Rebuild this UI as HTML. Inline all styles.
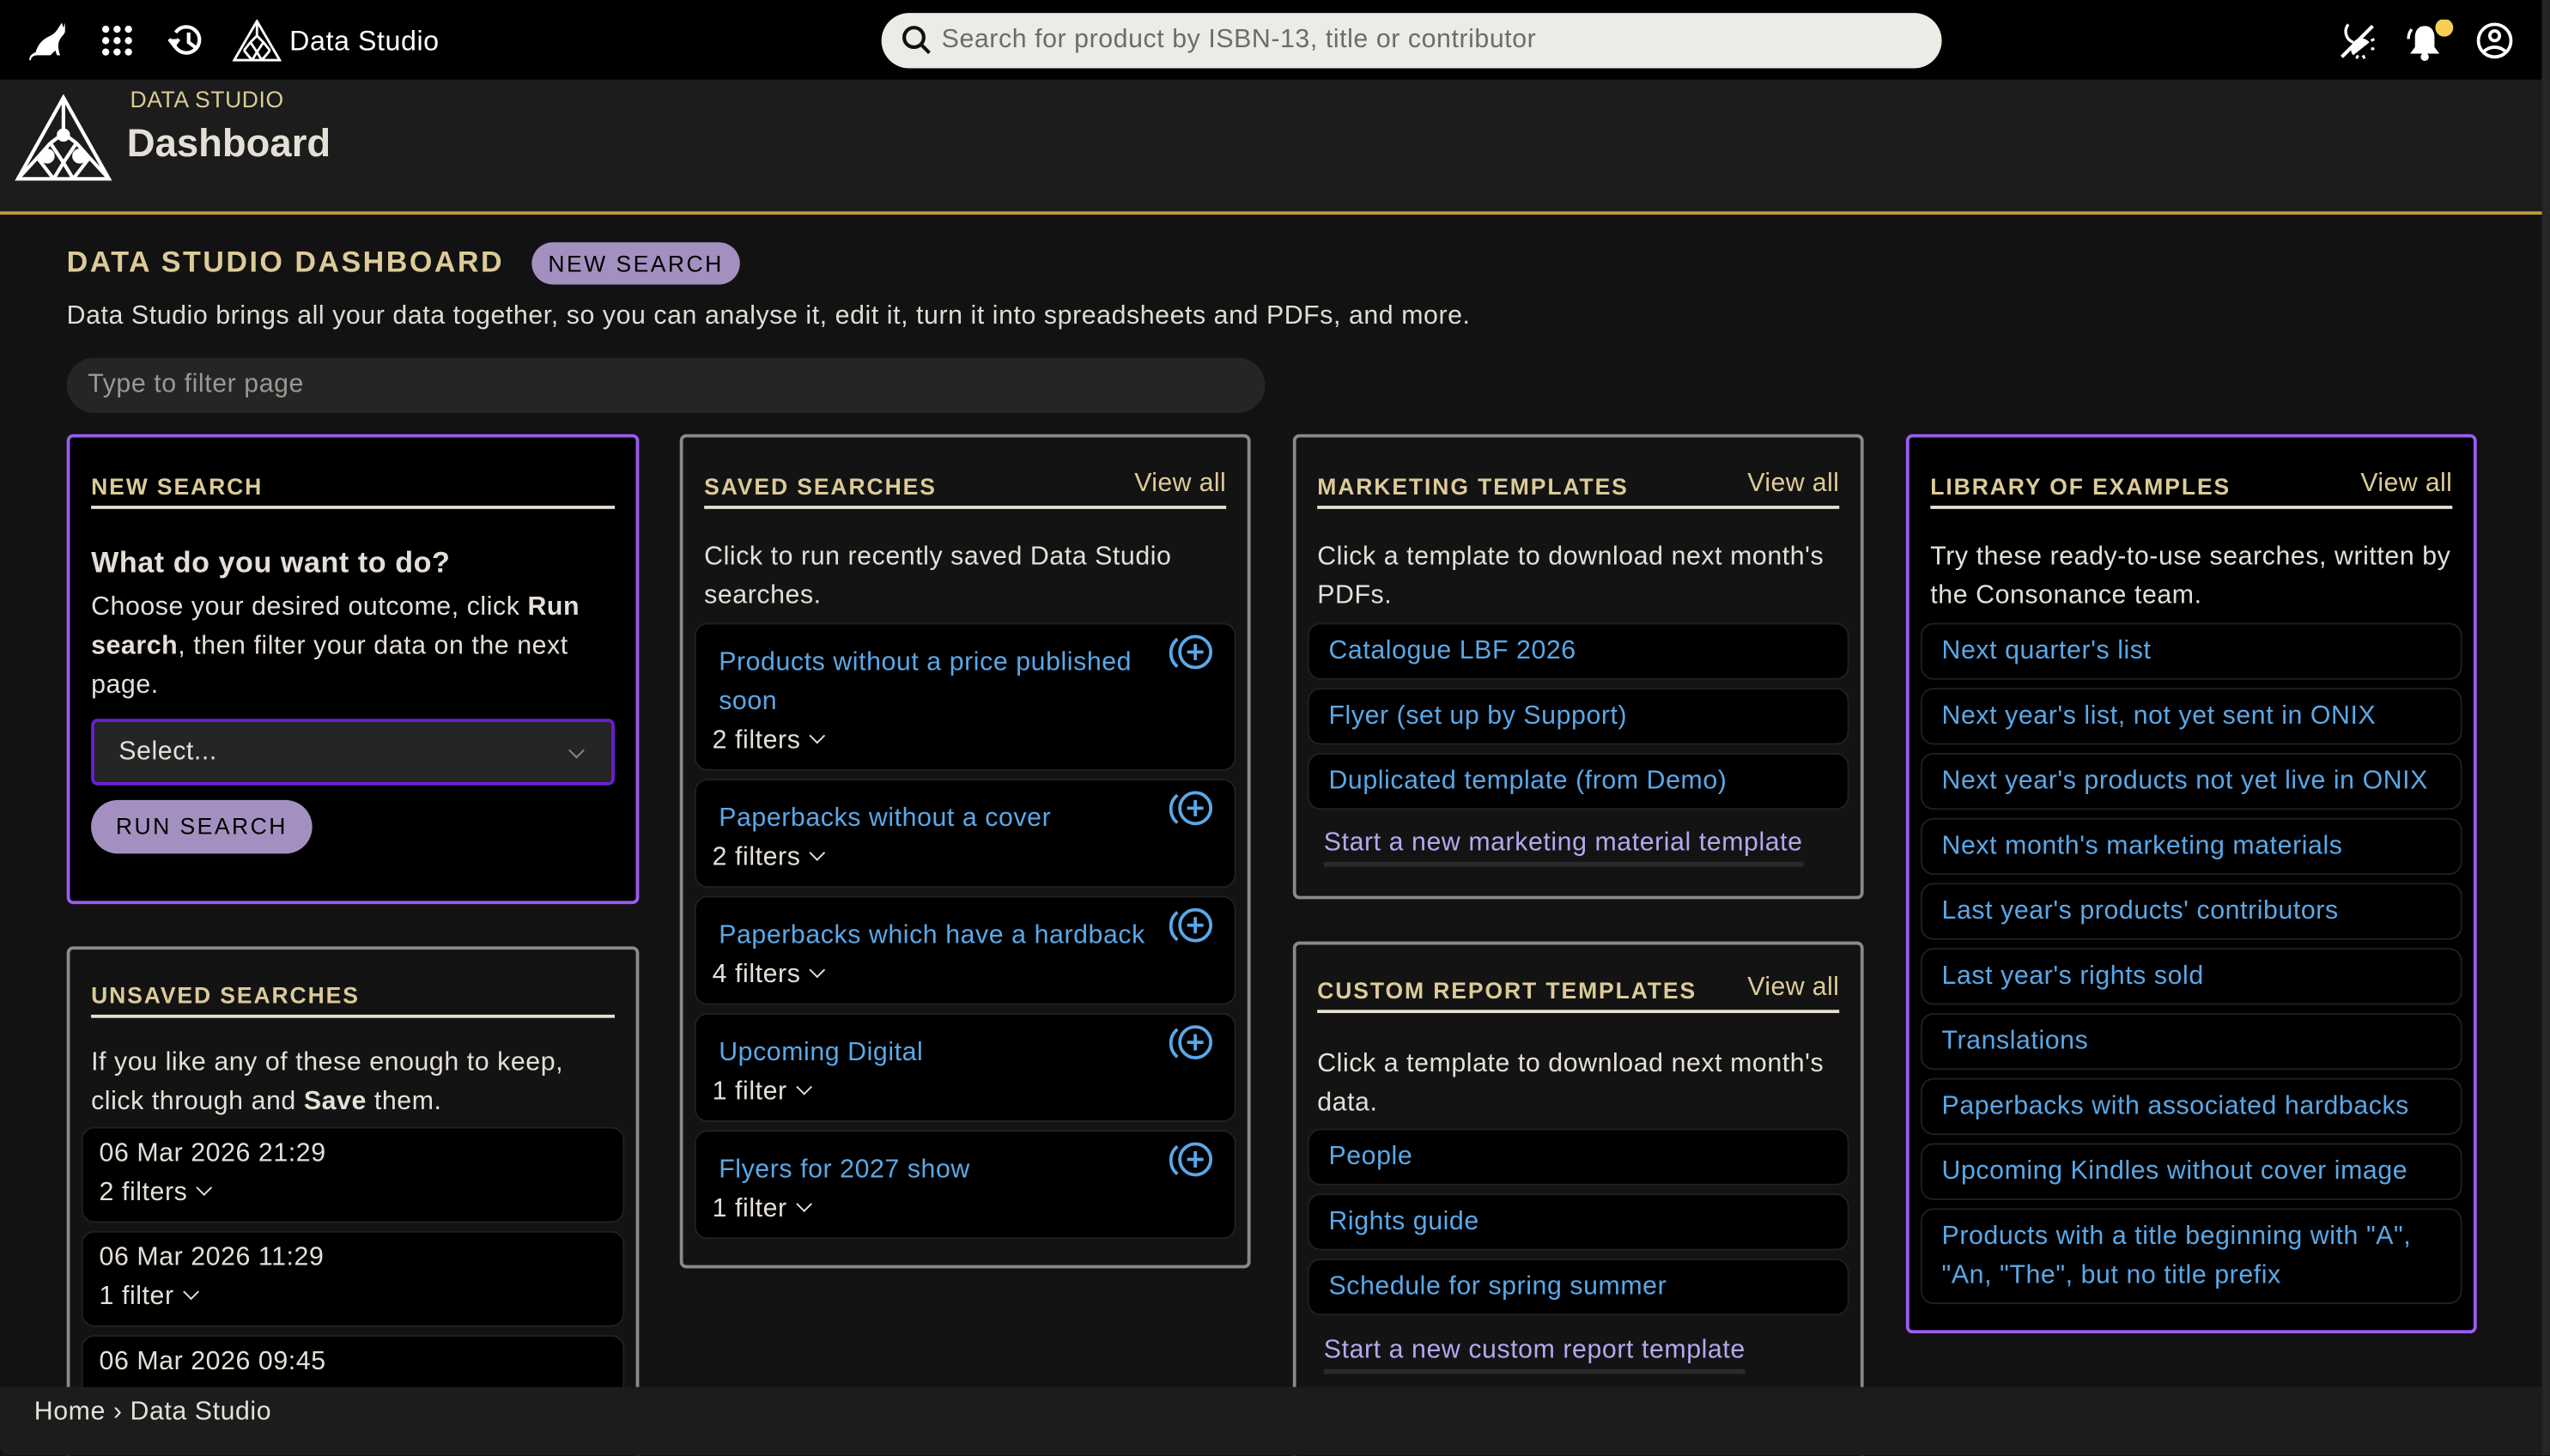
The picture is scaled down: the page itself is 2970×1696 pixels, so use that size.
<!DOCTYPE html>
<html><head><meta charset="utf-8"><style>
*{box-sizing:border-box;margin:0;padding:0}
html,body{width:2970px;height:1696px;overflow:hidden;background:#121212}
#s{position:absolute;left:0;top:0;width:1568px;height:895px;transform:scale(1.8941);transform-origin:0 0;font-family:"Liberation Sans",sans-serif;color:#e4e0d8;font-size:16px;letter-spacing:0.3px;background:#121212;overflow:hidden}
.a{position:absolute}
.top{left:0;top:0;width:1568px;height:49px;background:#000}
.hdr{left:0;top:49px;width:1568px;height:81px;background:#1c1c1c}
.gold{left:0;top:130px;width:1568px;height:2px;background:#c39a36}
.sb{left:1563px;top:0;width:5px;height:895px;background:#262626}
.panel{position:absolute;border:2px solid #8a8a86;border-radius:4px;background:#131313}
.purple{border-color:#9b5cf2;background:#000}
.h{position:absolute;left:13px;right:13px;top:22px;height:22px;border-bottom:2px solid #e6dfd2;font-size:14px;font-weight:bold;letter-spacing:1px;color:#dccb98}
.h span.v{position:absolute;right:0;top:-2px;font-size:16px;letter-spacing:0.2px;font-weight:normal;color:#dccb98}
.p{position:absolute;left:13px;right:10px;line-height:24px;color:#e4e0d8}
.it{position:absolute;left:7px;right:7px;background:#000;border:1px solid #202020;border-radius:8px}
.lk{color:#5aa8e8}
.it .lk{position:absolute;left:12px;top:5px;line-height:24px}
.lil{position:absolute;left:17px;color:#b4a8ee;border-bottom:3px solid #2a2a2a;line-height:22px}
.fl{position:absolute;left:10px;line-height:24px;color:#e4e0d8}
.chev{display:inline-block;width:7px;height:7px;border-right:1.6px solid #e4e0d8;border-bottom:1.6px solid #e4e0d8;transform:rotate(45deg);margin-left:7px;position:relative;top:-4px}
.plus{position:absolute;right:12px;top:6px}
</style></head><body><div id="s">
<div class="a top"></div>
<div class="a hdr"></div>
<div class="a gold"></div>

<svg class="a" style="left:18px;top:12px" width="24" height="26" viewBox="0 0 24 26"><path d="M20 2l1 3 1-3 0 5c0 2-2 3-3 5-2 3-1 7 0 10l-2 0-1-3-3 3-8 0c-2 0-4 1-4 3l-1 0c0-3 2-4 4-5 1-4 4-8 9-10 2-1 4-3 5-5z" fill="#fff"/></svg>
<svg class="a" style="left:62px;top:15px" width="20" height="20" viewBox="0 0 20 20" fill="#fff"><circle cx="3" cy="3" r="2.2"/><circle cx="10" cy="3" r="2.2"/><circle cx="17" cy="3" r="2.2"/><circle cx="3" cy="10" r="2.2"/><circle cx="10" cy="10" r="2.2"/><circle cx="17" cy="10" r="2.2"/><circle cx="3" cy="17" r="2.2"/><circle cx="10" cy="17" r="2.2"/><circle cx="17" cy="17" r="2.2"/></svg>
<svg class="a" style="left:102px;top:13px" width="24" height="24" viewBox="0 0 24 24" fill="none" stroke="#fff" stroke-width="2.2"><path d="M5 14a8 8 0 1 0 1-7"/><path d="M2 11l3 4 3-4" fill="#fff"/><path d="M14 7v6l4 3"/></svg>
<svg class="a" style="left:143px;top:12px" width="30" height="26" viewBox="0 0 30 26" fill="none" stroke="#fff" stroke-width="1.5"><path d="M15 1L1 25h28z"/><path d="M15 1v9M11 14l4-4 4 4M11 14l-4 5M19 14l4 5M7 19l5 6M23 19l-5 6M12 25l3-5 3 5M11 14l4 6 4-6"/></svg>
<div class="a" style="left:178px;top:16px;font-size:17px;color:#fff">Data Studio</div>

<div class="a" style="left:542px;top:8px;width:652px;height:34px;background:#ecebe6;border-radius:17px"></div>
<svg class="a" style="left:554px;top:15px" width="20" height="20" viewBox="0 0 20 20" fill="none" stroke="#111" stroke-width="2.2"><circle cx="8" cy="8" r="6"/><path d="M12.5 12.5l5 5"/></svg>
<div class="a" style="left:579px;top:16px;font-size:16px;color:#6c6c6c">Search for product by ISBN-13, title or contributor</div>

<svg class="a" style="left:1436px;top:12px" width="26" height="26" viewBox="0 0 26 26"><path d="M8 3a7 7 0 0 0 3 11 7 7 0 0 1-3-11z" fill="none" stroke="#fff" stroke-width="1.8"/><path d="M4 23L23 4" stroke="#fff" stroke-width="2.2"/><path d="M11 22a6 6 0 0 1 10-8z" fill="#fff"/><path d="M13 24l1-2M18 24l-1-2M22 18l2 0M22 13l2-1" stroke="#fff" stroke-width="1.6"/></svg>
<svg class="a" style="left:1478px;top:12px" width="32" height="26" viewBox="0 0 32 26"><path d="M13 4c-4 0-6 3-6 7v6l-3 4h18l-3-4v-6c0-4-2-7-6-7z" fill="#fff"/><circle cx="13" cy="23" r="2.5" fill="#fff"/><path d="M5 6a9 9 0 0 0-2 6" stroke="#fff" stroke-width="1.8" fill="none"/><circle cx="25" cy="5" r="5.5" fill="#f6ce55"/></svg>
<svg class="a" style="left:1522px;top:13px" width="24" height="24" viewBox="0 0 24 24" fill="none" stroke="#fff" stroke-width="2"><circle cx="12" cy="12" r="10"/><circle cx="12" cy="9" r="3"/><path d="M5 19c4-4 10-4 14 0"/></svg>

<svg class="a" style="left:9px;top:58px" width="60" height="54" viewBox="0 0 60 54" fill="none" stroke="#fff" stroke-width="2.2"><path d="M30 2L2 52h56z"/><path d="M30 2v22M22 30l8-6 8 6M22 30l-8 9M38 30l8 9M14 39l10 13M46 39l-10 13M22 30l8 12 8-12M24 52l6-10 6 10M2 52l12-13M58 52l-12-13"/><circle cx="30" cy="25" r="3" fill="#fff"/><circle cx="20" cy="38" r="3.5" fill="#fff"/><circle cx="40" cy="38" r="3.5" fill="#fff"/></svg>
<div class="a" style="left:80px;top:53px;font-size:14px;color:#dccb98">DATA STUDIO</div>
<div class="a" style="left:78px;top:75px;font-size:24px;font-weight:bold;letter-spacing:0;color:#e4e0d8">Dashboard</div>

<div class="a" style="left:41px;top:151px;font-size:18px;font-weight:bold;letter-spacing:1.3px;color:#dccb98">DATA STUDIO DASHBOARD</div>
<div class="a" style="left:327px;top:149px;width:128px;height:26px;background:#a390c0;border-radius:13px;color:#000;font-size:14px;letter-spacing:1.3px;text-align:center;line-height:26px">NEW SEARCH</div>
<div class="a" style="left:41px;top:186px;font-size:16px;color:#e0dcd4">Data Studio brings all your data together, so you can analyse it, edit it, turn it into spreadsheets and PDFs, and more.</div>
<div class="a" style="left:41px;top:220px;width:737px;height:34px;background:#252525;border-radius:17px;color:#9a9892;padding-left:13px;line-height:34px">Type to filter page</div>

<div class="panel purple" style="left:41px;top:267px;width:352px;height:289px">
 <div class="h">NEW SEARCH</div>
 <div class="p" style="top:65px;font-size:18px;font-weight:bold">What do you want to do?</div>
 <div class="p" style="top:93px">Choose your desired outcome, click <b>Run search</b>, then filter your data on the next page.</div>
 <div class="a" style="left:13px;top:173px;width:322px;height:41px;border:2px solid #6a1fd0;border-radius:4px;background:#252525;line-height:37px;padding-left:15px">Select...<span class="chev" style="position:absolute;right:18px;top:14px;border-color:#888"></span></div>
 <div class="a" style="left:13px;top:223px;width:136px;height:33px;background:#a390c0;border-radius:17px;color:#000;font-size:14px;letter-spacing:1.3px;text-align:center;line-height:33px">RUN SEARCH</div>
</div>

<div class="panel" style="left:41px;top:582px;width:352px;height:330px">
 <div class="h" style="top:20px">UNSAVED SEARCHES</div>
 <div class="p" style="top:58px">If you like any of these enough to keep, click through and <b>Save</b> them.</div>
 <div class="it" style="top:109px;height:59px"><div class="fl" style="top:4px">06 Mar 2026 21:29</div><div class="fl" style="top:28px">2 filters<span class="chev"></span></div></div>
 <div class="it" style="top:173px;height:59px"><div class="fl" style="top:4px">06 Mar 2026 11:29</div><div class="fl" style="top:28px">1 filter<span class="chev"></span></div></div>
 <div class="it" style="top:237px;height:59px"><div class="fl" style="top:4px">06 Mar 2026 09:45</div></div>
</div>

<div class="panel" style="left:418px;top:267px;width:351px;height:513px">
 <div class="h">SAVED SEARCHES<span class="v">View all</span></div>
 <div class="p" style="top:62px">Click to run recently saved Data Studio searches.</div>
 <div class="it" style="top:114px;height:91px"><div class="lk" style="position:absolute;left:14px;top:12px;right:60px;line-height:24px">Products without a price published soon</div><div class="fl" style="top:60px">2 filters<span class="chev"></span></div><svg class="plus" width="28" height="24" viewBox="0 0 28 24" fill="none" stroke="#5aa8e8" stroke-width="2"><path d="M5 3a11 11 0 0 0 0 17"/><circle cx="16" cy="11" r="9.5"/><path d="M16 6v10M11 11h10"/></svg></div>
 <div class="it" style="top:210px;height:67px"><div class="lk" style="position:absolute;left:14px;top:12px">Paperbacks without a cover</div><div class="fl" style="top:36px">2 filters<span class="chev"></span></div><svg class="plus" width="28" height="24" viewBox="0 0 28 24" fill="none" stroke="#5aa8e8" stroke-width="2"><path d="M5 3a11 11 0 0 0 0 17"/><circle cx="16" cy="11" r="9.5"/><path d="M16 6v10M11 11h10"/></svg></div>
 <div class="it" style="top:282px;height:67px"><div class="lk" style="position:absolute;left:14px;top:12px">Paperbacks which have a hardback</div><div class="fl" style="top:36px">4 filters<span class="chev"></span></div><svg class="plus" width="28" height="24" viewBox="0 0 28 24" fill="none" stroke="#5aa8e8" stroke-width="2"><path d="M5 3a11 11 0 0 0 0 17"/><circle cx="16" cy="11" r="9.5"/><path d="M16 6v10M11 11h10"/></svg></div>
 <div class="it" style="top:354px;height:67px"><div class="lk" style="position:absolute;left:14px;top:12px">Upcoming Digital</div><div class="fl" style="top:36px">1 filter<span class="chev"></span></div><svg class="plus" width="28" height="24" viewBox="0 0 28 24" fill="none" stroke="#5aa8e8" stroke-width="2"><path d="M5 3a11 11 0 0 0 0 17"/><circle cx="16" cy="11" r="9.5"/><path d="M16 6v10M11 11h10"/></svg></div>
 <div class="it" style="top:426px;height:67px"><div class="lk" style="position:absolute;left:14px;top:12px">Flyers for 2027 show</div><div class="fl" style="top:36px">1 filter<span class="chev"></span></div><svg class="plus" width="28" height="24" viewBox="0 0 28 24" fill="none" stroke="#5aa8e8" stroke-width="2"><path d="M5 3a11 11 0 0 0 0 17"/><circle cx="16" cy="11" r="9.5"/><path d="M16 6v10M11 11h10"/></svg></div>
</div>

<div class="panel" style="left:795px;top:267px;width:351px;height:286px">
 <div class="h">MARKETING TEMPLATES<span class="v">View all</span></div>
 <div class="p" style="top:62px">Click a template to download next month's PDFs.</div>
 <div class="it" style="top:114px;height:35px"><div class="lk">Catalogue LBF 2026</div></div>
 <div class="it" style="top:154px;height:35px"><div class="lk">Flyer (set up by Support)</div></div>
 <div class="it" style="top:194px;height:35px"><div class="lk">Duplicated template (from Demo)</div></div>
 <div class="lil" style="top:239px">Start a new marketing material template</div>
</div>

<div class="panel" style="left:795px;top:579px;width:351px;height:330px">
 <div class="h" style="top:20px">CUSTOM REPORT TEMPLATES<span class="v">View all</span></div>
 <div class="p" style="top:62px">Click a template to download next month's data.</div>
 <div class="it" style="top:113px;height:35px"><div class="lk">People</div></div>
 <div class="it" style="top:153px;height:35px"><div class="lk">Rights guide</div></div>
 <div class="it" style="top:193px;height:35px"><div class="lk">Schedule for spring summer</div></div>
 <div class="lil" style="top:239px">Start a new custom report template</div>
</div>

<div class="panel purple" style="left:1172px;top:267px;width:351px;height:553px">
 <div class="h">LIBRARY OF EXAMPLES<span class="v">View all</span></div>
 <div class="p" style="top:62px">Try these ready-to-use searches, written by the Consonance team.</div>
 <div class="it" style="top:114px;height:35px"><div class="lk">Next quarter's list</div></div>
 <div class="it" style="top:154px;height:35px"><div class="lk">Next year's list, not yet sent in ONIX</div></div>
 <div class="it" style="top:194px;height:35px"><div class="lk">Next year's products not yet live in ONIX</div></div>
 <div class="it" style="top:234px;height:35px"><div class="lk">Next month's marketing materials</div></div>
 <div class="it" style="top:274px;height:35px"><div class="lk">Last year's products' contributors</div></div>
 <div class="it" style="top:314px;height:35px"><div class="lk">Last year's rights sold</div></div>
 <div class="it" style="top:354px;height:35px"><div class="lk">Translations</div></div>
 <div class="it" style="top:394px;height:35px"><div class="lk">Paperbacks with associated hardbacks</div></div>
 <div class="it" style="top:434px;height:35px"><div class="lk">Upcoming Kindles without cover image</div></div>
 <div class="it" style="top:474px;height:59px"><div class="lk" style="right:10px">Products with a title beginning with "A", "An, "The", but no title prefix</div></div>
</div>

<div class="a" style="left:0;top:853px;width:1568px;height:42px;background:#1c1c1c;border-radius:0 0 6px 6px"></div>
<div class="a" style="left:21px;top:860px;font-size:16px;color:#e4e0d8">Home › Data Studio</div>
<div class="a sb"></div>
</div></body></html>
